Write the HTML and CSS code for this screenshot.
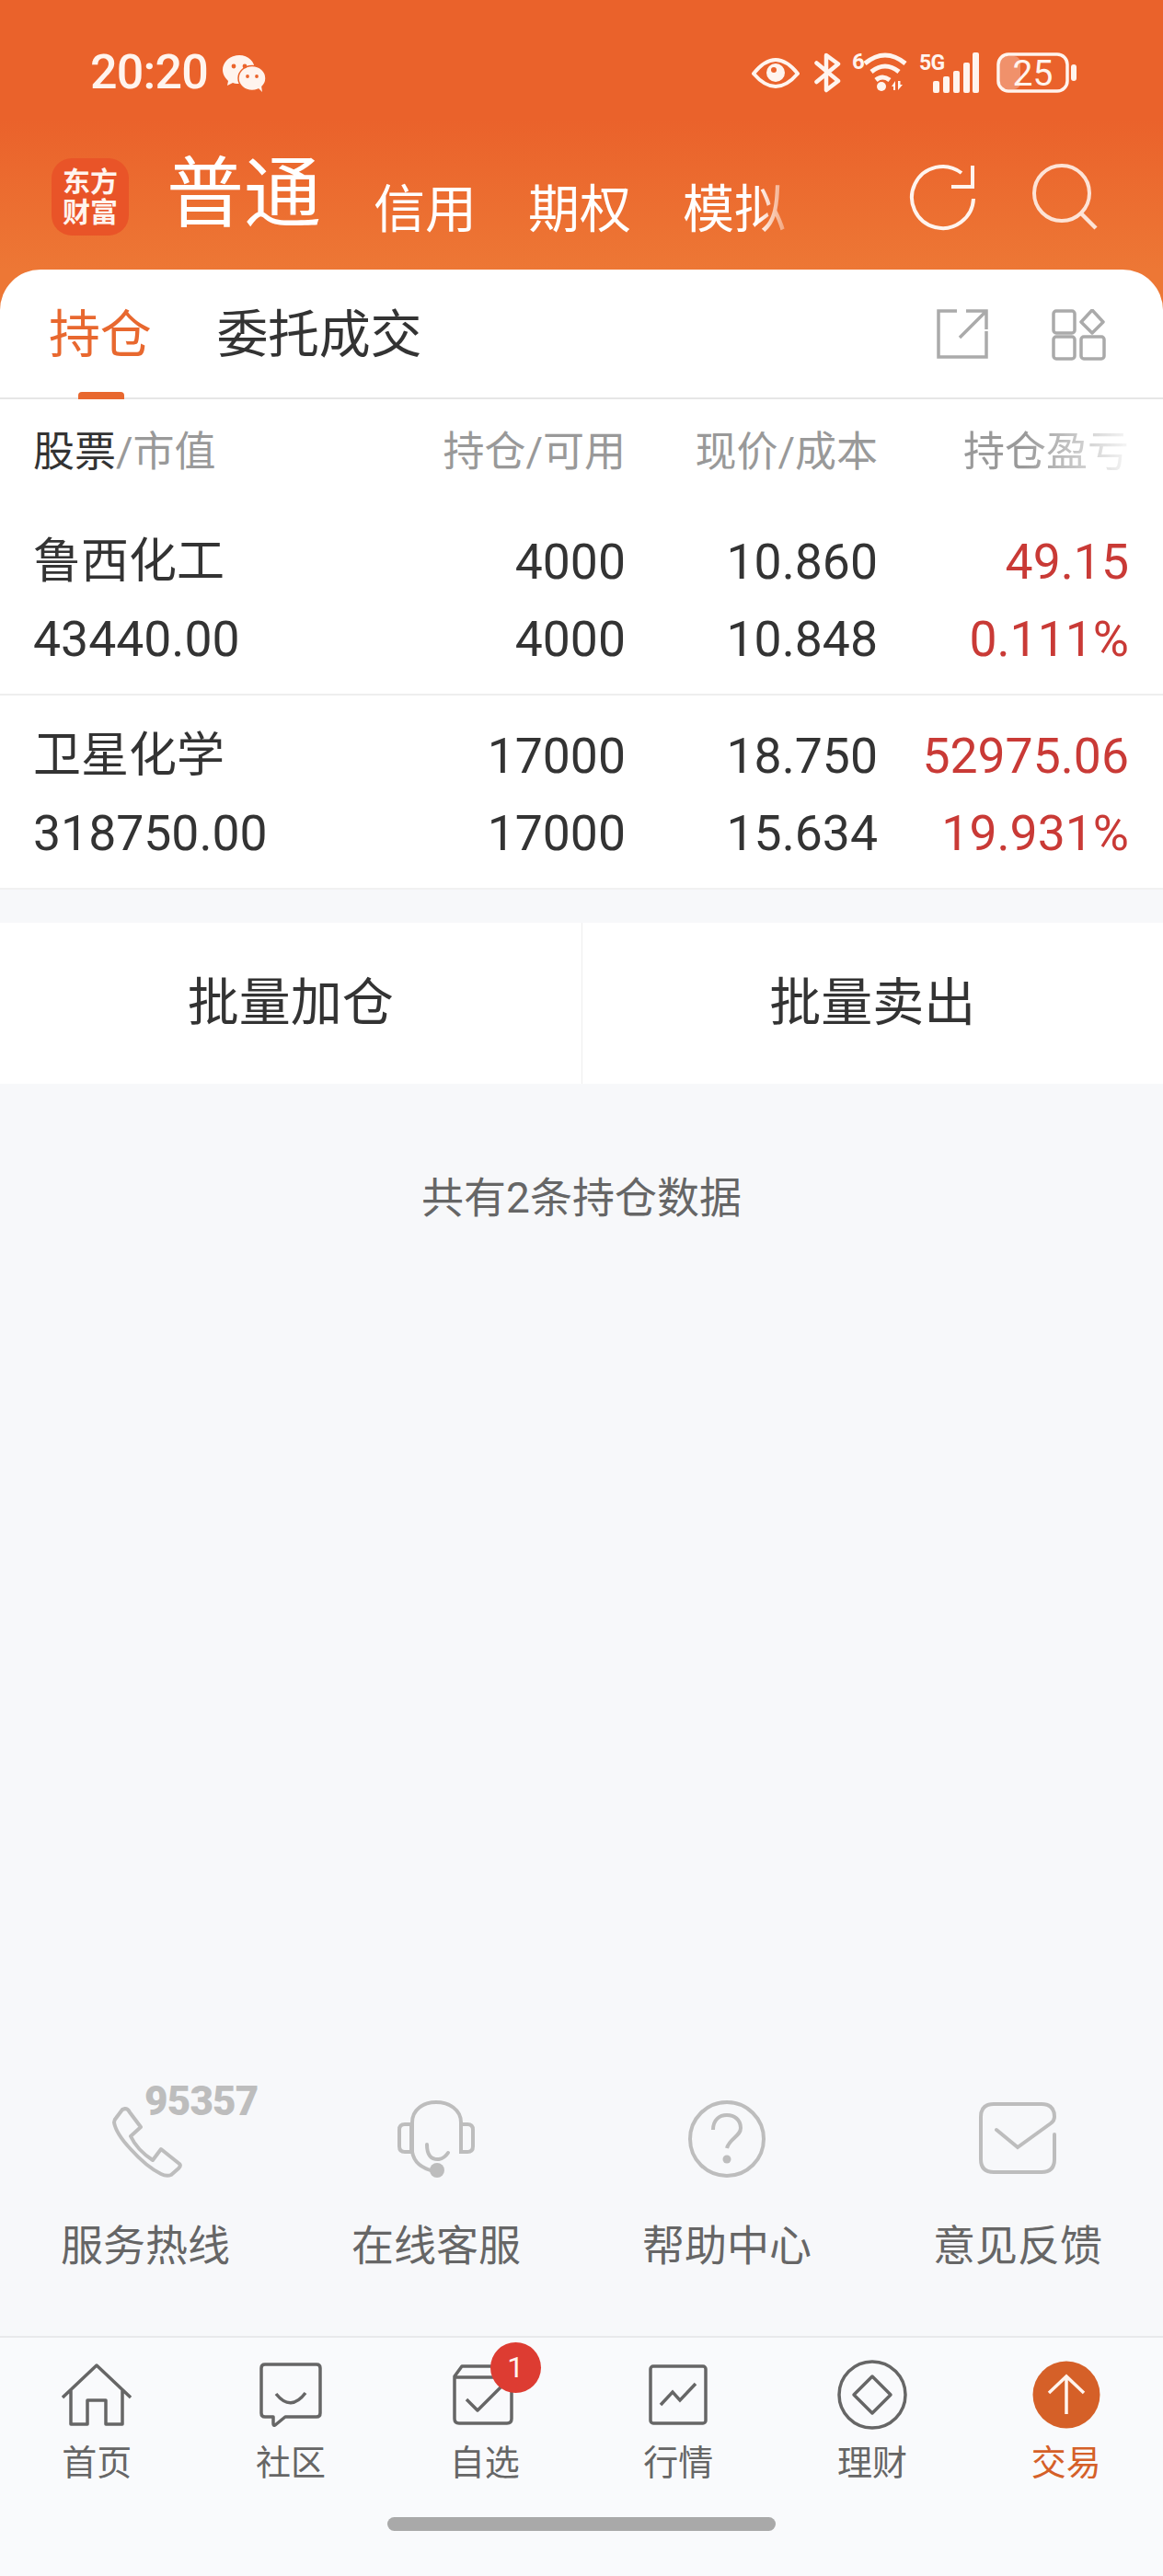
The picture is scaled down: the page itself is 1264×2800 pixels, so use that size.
FILE: index.html
```html
<!DOCTYPE html>
<html lang="zh-CN">
<head>
<meta charset="UTF-8" />
<meta name="viewport" content="width=device-width, initial-scale=1" />
<title>交易</title>
<link rel="stylesheet" href="styles.css">
</head>
<body>

<div class="page">

  <header class="top">
    <div class="status">
      <span class="time">20:20</span>
      <svg class="wechat" width="47" height="40" viewBox="0 0 47 40">
        <path fill="#fff4ee" d="M18 0C8 0 0 7 0 16c0 5 3 9 6 12l-1 5 6-3c2 1 5 1 7 1 8 0 17-6 17-15S28 0 18 0Z"/>
        <ellipse cx="32" cy="25" rx="15" ry="13.5" fill="#fff4ee" stroke="#eb642c" stroke-width="1.5"/>
        <path fill="#fff4ee" d="M38 35l5 5-1-7Z"/>
        <circle cx="12" cy="12" r="2.4" fill="#eb642c"/><circle cx="24" cy="12" r="2.4" fill="#eb642c"/>
        <circle cx="27" cy="23" r="1.9" fill="#eb642c"/><circle cx="37" cy="23" r="1.9" fill="#eb642c"/>
      </svg>
      <div class="status-right">
        <svg width="52" height="44" viewBox="0 0 52 44" class="si-eye">
          <path fill="none" stroke="#fff4ee" stroke-width="4" stroke-linejoin="round" d="M2 23Q26-7 50 23Q26 51 2 23Z"/>
          <circle cx="26" cy="22" r="10" fill="#fff4ee"/>
          <circle cx="24" cy="19" r="3" fill="#eb642c"/>
        </svg>
        <svg width="29" height="44" viewBox="0 0 29 44" class="si-bt">
          <path fill="none" stroke="#fff4ee" stroke-width="4.5" stroke-linecap="round" stroke-linejoin="round" d="M2.500 11.500L26 31L13 41V3L26 12.500L2.500 32"/>
        </svg>
        <div class="si-box si-wifi">
          <span class="si-six">6</span>
          <svg width="62" height="46" viewBox="0 0 62 46">
            <path fill="none" stroke="#fff4ee" stroke-width="5" d="M14 14Q36-4 58 14M21 23Q36 11 51 23M26 32Q33 26 41 32" />
            <circle cx="32" cy="39" r="5" fill="#fff4ee"/>
            <path fill="#fff4ee" d="M47 43V33l-4 6h2v4ZM50 33v10l5-6h-2.500v-4Z"/>
          </svg>
        </div>
        <div class="si-box si-signal">
          <span class="si-five">5G</span>
          <svg width="65" height="44" viewBox="0 0 65 44">
            <g fill="#fff4ee">
              <rect x="15" y="31" width="7" height="13" rx="2"/>
              <rect x="26" y="26" width="7" height="18" rx="2"/>
              <rect x="37" y="20" width="7" height="24" rx="2"/>
              <rect x="48" y="11" width="7" height="33" rx="2"/>
              <rect x="58" y="0" width="7" height="44" rx="2"/>
            </g>
          </svg>
        </div>
        <div class="si-box si-batt">
          <span class="si-level">25</span>
          <svg width="87" height="44" viewBox="0 0 87 44">
            <rect x="4" y="4" width="22" height="36" rx="7" fill="#fff" opacity=".3"/>
            <rect x="2" y="2" width="75" height="40" rx="11" fill="none" stroke="#fff4ee" stroke-width="3.500"/>
            <rect x="81" y="13" width="6" height="18" rx="3" fill="#fff4ee"/>
          </svg>
        </div>
      </div>
    </div>

    <nav class="nav">
      <div class="logo">东方<br>财富</div>
      <a class="nav-main">普通</a>
      <a class="nav-item">信用</a>
      <a class="nav-item">期权</a>
      <a class="nav-item nav-fade">模拟</a>
      <svg class="nav-refresh" width="72" height="74" viewBox="0 0 72 74">
        <path fill="none" stroke="#fff4ee" stroke-width="4" d="M70 38A33.500 33.500 0 1 1 57 10"/>
        <path fill="none" stroke="#fff4ee" stroke-width="4" d="M69 2V25H46"/>
      </svg>
      <svg class="nav-search" width="72" height="73" viewBox="0 0 72 73">
        <circle cx="32" cy="33" r="30" fill="none" stroke="#fde3d6" stroke-width="4"/>
        <path stroke="#fde3d6" stroke-width="4.500" d="M53 55L69 71"/>
      </svg>
    </nav>
  </header>

  <div class="card">
    <div class="tabs">
      <a class="tab tab-on">持仓</a>
      <a class="tab">委托成交</a>
      <svg class="tab-share" width="56" height="54" viewBox="0 0 56 54">
        <path fill="none" stroke="#aaa" stroke-width="3.500" d="M22 2H2V52H54V24M53 3L25 31M32 2H54V22"/>
      </svg>
      <svg class="tab-grid" width="60" height="56" viewBox="0 0 60 56">
        <g fill="none" stroke="#aaa" stroke-width="3.500">
          <rect x="2" y="2" width="23" height="24" rx="3"/>
          <rect x="2" y="30" width="23" height="24" rx="3"/>
          <rect x="32" y="30" width="25" height="24" rx="3"/>
          <path stroke-linejoin="round" d="M44 1L56 14L44 26L32 14Z"/>
        </g>
      </svg>
    </div>

    <div class="holdings">
      <div class="row row-head">
        <span><b>股票</b>/市值</span>
        <span>持仓/可用</span>
        <span>现价/成本</span>
        <span class="head-fade">持仓盈亏</span>
      </div>
      <div class="row row-data">
        <span class="name">鲁西化工</span><span>4000</span><span>10.860</span><span class="red">49.15</span>
        <span>43440.00</span><span>4000</span><span>10.848</span><span class="red">0.111%</span>
      </div>
      <div class="row row-data row-line">
        <span class="name">卫星化学</span><span>17000</span><span>18.750</span><span class="red">52975.06</span>
        <span>318750.00</span><span>17000</span><span>15.634</span><span class="red">19.931%</span>
      </div>
    </div>
  </div>

  <div class="batch">
    <a class="batch-btn">批量加仓</a>
    <a class="batch-btn">批量卖出</a>
  </div>

  <main class="rest">
    <p class="count">共有2条持仓数据</p>
    <div class="services">
      <a class="service">
        <span class="service-icon">
          <span class="hotline">95357</span>
          <svg class="ic-phone" width="78" height="78" viewBox="0 0 78 78">
            <path fill="none" stroke="#bdbdbd" stroke-width="4" stroke-linejoin="round" d="M15 3Q18 3 20 7L32 23L21 33Q28 48 45 59L54 47L74 63Q76 65 73 68L65 75Q60 77 54 74Q38 66 21 47Q5 30 3 18Q3 15 6 12L12 4Z"/>
          </svg>
        </span>
        <span class="service-text">服务热线</span>
      </a>
      <a class="service">
        <span class="service-icon">
          <svg width="84" height="84" viewBox="0 0 84 84">
            <g fill="none" stroke="#bdbdbd" stroke-width="4">
              <path d="M16 57V24C16 10 28 2 42 2S69 10 69 24V27"/>
              <path d="M15 26H8Q2 26 2 32V50Q2 56 8 56H15ZM69 26H76Q82 26 82 32V50Q82 56 76 56H69Z"/>
              <path d="M16 56C18 68 26 74 40 77"/>
              <path stroke-linecap="round" d="M32 48Q32 65 45 64Q51 63 55 57"/>
            </g>
            <circle cx="43" cy="76" r="8" fill="#bdbdbd"/>
          </svg>
        </span>
        <span class="service-text">在线客服</span>
      </a>
      <a class="service">
        <span class="service-icon">
          <svg width="84" height="84" viewBox="0 0 84 84">
            <circle cx="42" cy="42" r="40" fill="none" stroke="#bdbdbd" stroke-width="4"/>
            <path fill="none" stroke="#bdbdbd" stroke-width="4" d="M27 32C27 21 34 16 42 16C50 16 57 21 57 30C57 39 45 41 42 52"/>
            <circle cx="42" cy="64" r="4.500" fill="#bdbdbd"/>
          </svg>
        </span>
        <span class="service-text">帮助中心</span>
      </a>
      <a class="service">
        <span class="service-icon">
          <svg class="ic-mail" width="84" height="78" viewBox="0 0 84 78">
            <path fill="none" stroke="#bdbdbd" stroke-width="4" stroke-linecap="round" d="M82 35V62Q82 76 68 76H16Q2 76 2 62V16Q2 2 16 2H68Q82 2 82 16Q82 20 78 23L42 49L19 30"/>
          </svg>
        </span>
        <span class="service-text">意见反馈</span>
      </a>
    </div>
  </main>

  <footer class="bottom">
    <div class="bar">
      <a class="bar-item">
        <span class="bar-icon">
          <svg width="76" height="70" viewBox="0 0 76 70">
            <path fill="none" stroke="#666" stroke-width="3.500" stroke-linejoin="round" d="M1 38L38 3L75 38M10 29V67H28V41H48V67H66V29"/>
          </svg>
        </span>
        <span class="bar-text">首页</span>
      </a>
      <a class="bar-item">
        <span class="bar-icon">
          <svg width="68" height="70" viewBox="0 0 68 70">
            <path fill="none" stroke="#666" stroke-width="3.500" stroke-linejoin="round" d="M6 2H62Q66 2 66 6V55Q66 59 62 59H28L17 68Q15 69 15 66V59H6Q2 59 2 55V6Q2 2 6 2Z"/>
            <path fill="none" stroke="#666" stroke-width="3.500" d="M18 34Q34 54 50 33"/>
          </svg>
        </span>
        <span class="bar-text">社区</span>
      </a>
      <a class="bar-item">
        <span class="bar-icon">
          <svg class="ic-watch" width="66" height="66" viewBox="0 0 66 66">
            <path fill="none" stroke="#666" stroke-width="3.500" stroke-linejoin="round" d="M10 2H56L64 13V59Q64 64 59 64H7Q2 64 2 59V13ZM2 14H64M15 38L27 50L53 24"/>
          </svg>
          <span class="badge">1</span>
        </span>
        <span class="bar-text">自选</span>
      </a>
      <a class="bar-item">
        <span class="bar-icon">
          <svg width="64" height="66" viewBox="0 0 64 66">
            <rect x="2" y="2" width="60" height="62" rx="3" fill="none" stroke="#666" stroke-width="3.500"/>
            <path fill="none" stroke="#666" stroke-width="3.500" d="M13 44L26 30L34 39L51 21"/>
          </svg>
        </span>
        <span class="bar-text">行情</span>
      </a>
      <a class="bar-item">
        <span class="bar-icon">
          <svg width="76" height="76" viewBox="0 0 76 76">
            <circle cx="38" cy="38" r="36" fill="none" stroke="#666" stroke-width="3.500"/>
            <path fill="none" stroke="#666" stroke-width="3.500" stroke-linejoin="round" d="M38 18L58 38L38 58L18 38Z"/>
          </svg>
        </span>
        <span class="bar-text">理财</span>
      </a>
      <a class="bar-item bar-on">
        <span class="bar-icon">
          <svg width="74" height="74" viewBox="0 0 74 74">
            <circle cx="37" cy="37" r="36.500" fill="#d56028"/>
            <path fill="none" stroke="#fff4ee" stroke-width="3.500" d="M37 18V58M18 35L37 17L56 35"/>
          </svg>
        </span>
        <span class="bar-text">交易</span>
      </a>
    </div>
    <div class="home-line"></div>
  </footer>

</div>

</body>
</html>
```

FILE: styles.css
```css
* {
  box-sizing: border-box;
}
body {
  margin: 0;
  font-family: Roboto, "Noto Sans CJK SC", sans-serif;
  background: #f7f8fa;
  color: #333;
}
svg {
  display: block;
  flex: none;
}
.page {
  width: 1264px;
  height: 2800px;
  display: flex;
  flex-direction: column;
  overflow: hidden;
}

/* orange header */
.top {
  height: 337px;
  margin-bottom: -44px;
  padding-bottom: 44px;
  background: linear-gradient(#ea622b 0, #ea622b 130px, #ed7735 293px);
  color: #fff;
}
.status {
  height: 172px;
  padding: 57px 94px 0 98px;
  display: flex;
  align-items: flex-start;
}
.time {
  font-size: 52px;
  line-height: 44px;
  font-weight: 500;
  letter-spacing: -.8px;
  color: #fff4ee;
}
.wechat {
  margin: 3px 0 0 16px;
}
.status-right {
  margin-left: auto;
  display: flex;
}
.si-eye {
  margin-right: 16px;
}
.si-bt {
  margin-right: 12px;
}
.si-box {
  position: relative;
  color: #fff4ee;
}
.si-wifi {
  margin-right: 11px;
  margin-top: -2px;
}
.si-signal {
  margin-right: 19px;
}
.si-six {
  position: absolute;
  left: 0;
  top: 0;
  font-size: 24px;
  line-height: 24px;
  font-weight: 700;
}
.si-five {
  position: absolute;
  left: 0;
  top: 0;
  font-size: 23px;
  line-height: 24px;
  font-weight: 700;
  letter-spacing: -.8px;
}
.si-level {
  position: absolute;
  left: 2px;
  width: 75px;
  top: 0;
  text-align: center;
  font-size: 39px;
  line-height: 46px;
}

.nav {
  height: 84px;
  padding-left: 56px;
  display: flex;
  align-items: flex-start;
}
.logo {
  width: 84px;
  height: 84px;
  border-radius: 22px;
  background: #e95428;
  color: #fff4ee;
  font-size: 30px;
  line-height: 33px;
  font-weight: 700;
  text-align: center;
  padding-top: 9px;
}
.nav-main {
  margin-left: 41px;
  width: 168px;
  font-size: 84px;
  line-height: 84px;
  margin-top: -2px;
}
.nav-item {
  margin-left: 56px;
  font-size: 56px;
  line-height: 64px;
  margin-top: 24px;
}
.nav-main + .nav-item {
  margin-left: 57px;
}
.nav-fade {
  -webkit-mask-image: linear-gradient(to right, #000 72%, rgba(0,0,0,.35));
  mask-image: linear-gradient(to right, #000 72%, rgba(0,0,0,.35));
}
.nav-refresh {
  margin: 6px 0 0 auto;
}
.nav-search {
  margin: 5px 70px 0 62px;
}

/* white card */
.card {
  position: relative;
  background: #fff;
  border-radius: 44px 44px 0 0;
  border-bottom: 2px solid #f1f1f1;
}
.tabs {
  height: 141px;
  padding: 0 61px 0 53px;
  display: flex;
  align-items: flex-start;
  border-bottom: 2px solid #e6e6e6;
}
.tab {
  font-size: 56px;
  line-height: 64px;
  margin-top: 39px;
  margin-right: 71px;
  letter-spacing: -.3px;
  position: relative;
}
.tab-on {
  color: #e8682f;
}
.tab-on::after {
  content: "";
  position: absolute;
  left: 32px;
  width: 50px;
  top: 94px;
  height: 8px;
  border-radius: 4px 4px 0 0;
  background: #e8682f;
}
.tab-share {
  margin: 43px 0 0 auto;
}
.tab-grid {
  margin: 43px 0 0 69px;
}

.row {
  display: grid;
  grid-template-columns: 366px 278px 274px 273px;
  padding: 0 37px 0 36px;
  text-align: right;
}
.row span:nth-child(4n+1) {
  text-align: left;
}
.row-head {
  height: 132px;
  font-size: 45px;
  line-height: 116px;
  color: #999;
}
.row-head b {
  font-weight: 400;
  color: #333;
}
.head-fade {
  -webkit-mask-image: linear-gradient(to right, #000 58%, rgba(0,0,0,.08));
  mask-image: linear-gradient(to right, #000 58%, rgba(0,0,0,.08));
}
.row-data {
  font-size: 53.5px;
  line-height: 84px;
  padding-top: 3px;
  padding-bottom: 17px;
}
.row-data .name {
  font-size: 52px;
}
.row-line {
  border-top: 2px solid #eee;
  padding-top: 24px;
}
.red {
  color: #c93a36;
}

/* batch buttons */
.batch {
  margin-top: 36px;
  height: 175px;
  display: flex;
  background: #fff;
}
.batch-btn {
  flex: 1;
  text-align: center;
  font-size: 56px;
  line-height: 175px;
}
.batch-btn + .batch-btn {
  border-left: 1px solid #eee;
}

.rest {
  flex: 1;
  display: flex;
  flex-direction: column;
}
.count {
  margin: 94px 0 0;
  text-align: center;
  font-size: 46px;
  line-height: 60px;
  color: #666;
}
.services {
  margin-top: auto;
  padding-bottom: 68px;
  display: grid;
  grid-template-columns: repeat(4, 316px);
}
.service {
  display: flex;
  flex-direction: column;
  align-items: center;
}
.service-icon {
  position: relative;
  height: 84px;
  display: block;
}
.hotline {
  position: absolute;
  left: 38px;
  top: -21px;
  font-size: 44px;
  line-height: 44px;
  font-weight: 900;
  letter-spacing: -.8px;
  color: #bdbdbd;
}
.ic-phone {
  position: relative;
  left: 2px;
  top: 6px;
}
.ic-mail {
  margin-top: 2px;
}
.service-text {
  margin-top: 44px;
  font-size: 46px;
  line-height: 60px;
  color: #666;
}

/* bottom bar */
.bottom {
  height: 261px;
  background: #f9fafc;
  border-top: 2px solid #e8e9eb;
}
.bar {
  display: grid;
  grid-template-columns: repeat(6, 1fr);
  padding-top: 18px;
}
.bar-item {
  display: flex;
  flex-direction: column;
  align-items: center;
  font-size: 38px;
  line-height: 46px;
  color: #666;
}
.bar-text {
  margin-top: 7px;
}
.bar-on {
  color: #d56028;
}
.bar-icon {
  position: relative;
  height: 88px;
  display: flex;
  align-items: center;
}
.ic-watch {
  margin-left: -4px;
}
.badge {
  position: absolute;
  left: 37px;
  top: -13px;
  width: 55px;
  height: 55px;
  border-radius: 50%;
  background: #dd3c32;
  color: #fff4ee;
  font-size: 32px;
  line-height: 55px;
  text-align: center;
}
.home-line {
  width: 422px;
  height: 15px;
  margin: 36px auto 0;
  border-radius: 8px;
  background: #a9a9a9;
}
```
